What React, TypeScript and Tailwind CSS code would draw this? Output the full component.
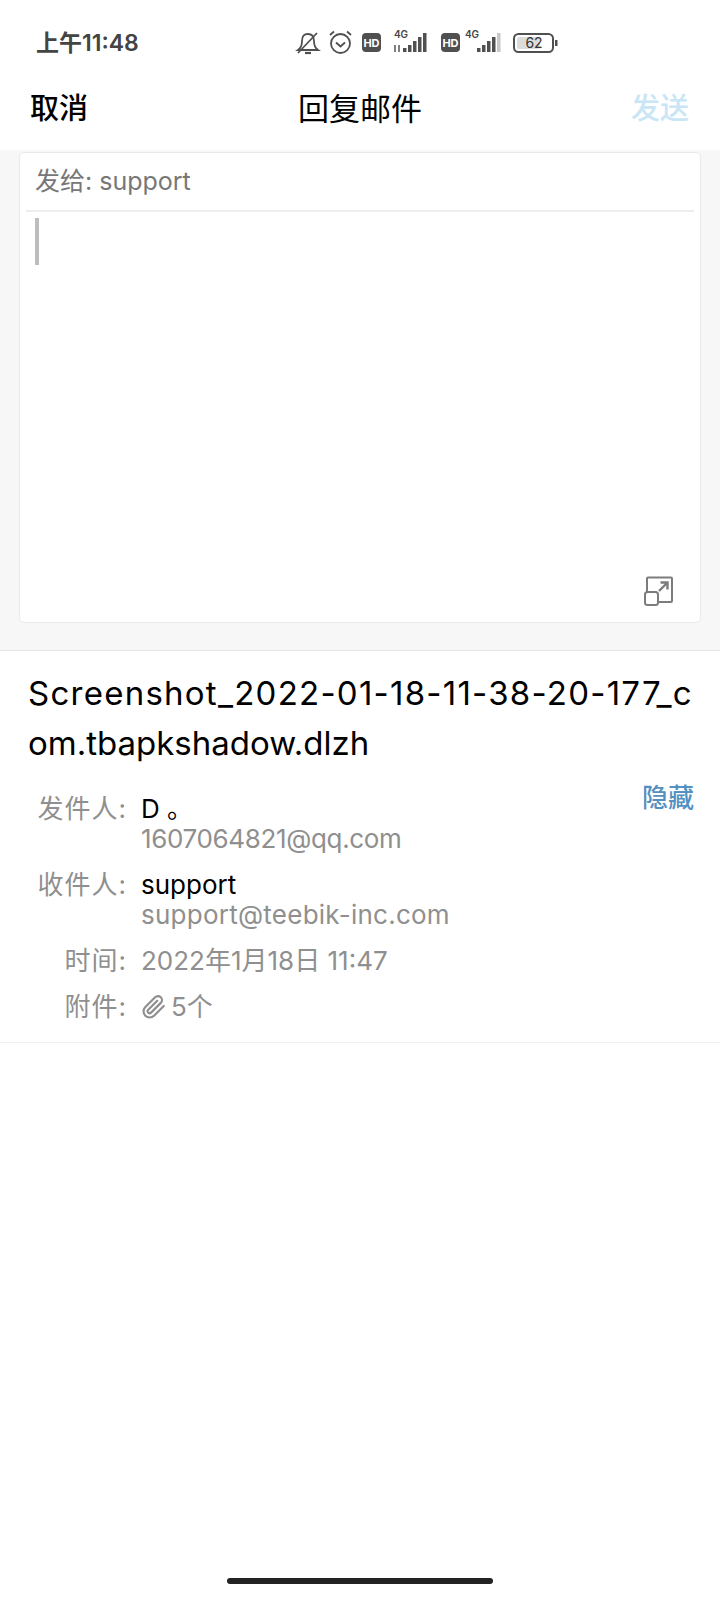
const sans = "font-['Inter','Noto_Sans_CJK_SC',sans-serif]";

function StatusIcons() {
  return (
    <svg width="266" height="32" viewBox="0 0 266 32" className="block">
      <g fill="none" stroke="#505050" strokeWidth="1.8">
        <path d="M4 23 C7 21 8 18 8 14 C8 9 10 7 14 7 C18 7 20 9 20 14 C20 18 21 21 24 23 Z" />
        <path d="M11 26 H17" strokeWidth="2.2" />
        <path d="M4 26 L23 6" />
        <circle cx="46.5" cy="16.5" r="9.5" />
        <path d="M42 15.5 L46.5 19.5 L51 15.5" />
        <path d="M36 8 L40 4.5 M57 8 L53 4.5" />
      </g>
      <rect x="68" y="6" width="19" height="19" rx="4" fill="#505050" />
      <text x="77.5" y="20" textAnchor="middle" fontSize="11" fontWeight="700" fill="#fff" fontFamily="Inter, sans-serif">HD</text>
      <text x="107" y="11" textAnchor="middle" fontSize="10" fontWeight="600" fill="#444" fontFamily="Inter, sans-serif">4G</text>
      <path d="M101 18 V25 M105 18 V25" stroke="#555" strokeWidth="1.5" />
      <g fill="#505050">
        <rect x="109" y="21" width="3.5" height="4" />
        <rect x="114" y="18" width="3.5" height="7" />
        <rect x="119" y="14" width="3.5" height="11" />
        <rect x="124" y="10" width="3.5" height="15" />
        <rect x="129" y="6" width="3.5" height="19" />
      </g>
      <rect x="147" y="6" width="19" height="19" rx="4" fill="#505050" />
      <text x="156.5" y="20" textAnchor="middle" fontSize="11" fontWeight="700" fill="#fff" fontFamily="Inter, sans-serif">HD</text>
      <text x="178" y="11" textAnchor="middle" fontSize="10" fontWeight="600" fill="#444" fontFamily="Inter, sans-serif">4G</text>
      <g fill="#505050">
        <rect x="183" y="21" width="3.5" height="4" />
        <rect x="188" y="18" width="3.5" height="7" />
        <rect x="193" y="14" width="3.5" height="11" />
        <rect x="198" y="10" width="3.5" height="15" />
      </g>
      <rect x="203" y="6" width="3.5" height="19" fill="#c8c8c8" />
      <rect x="220" y="7" width="39" height="18" rx="4.5" fill="none" stroke="#505050" strokeWidth="2" />
      <rect x="223" y="10" width="23" height="12" rx="2" fill="#dcdcdc" />
      <text x="240" y="21" textAnchor="middle" fontSize="14" fill="#333" fontFamily="Inter, sans-serif">62</text>
      <rect x="261" y="13" width="2.5" height="6" fill="#505050" />
    </svg>
  );
}

function ExpandIcon() {
  return (
    <svg width="30" height="30" viewBox="0 0 30 30" fill="none" stroke="#7c7c7c" strokeWidth="2">
      <path d="M3 16 V2.5 a1 1 0 0 1 1 -1 H27 a1 1 0 0 1 1 1 V25 a1 1 0 0 1 -1 1 H14" />
      <rect x="1" y="16" width="13" height="13" rx="2.5" />
      <path d="M15 15 L23 7 M16.5 6.5 H23.5 V13.5" strokeWidth="2.4" />
    </svg>
  );
}

function Clip() {
  return (
    <svg width="26" height="26" viewBox="0 0 24 24" fill="none" stroke="#8f8f8f" strokeWidth="2" strokeLinecap="round" strokeLinejoin="round">
      <path d="M21 11 l-9 9 a5.5 5.5 0 0 1 -8 -8 l9 -9 a3.7 3.7 0 0 1 5.3 5.2 l-9 9 a1.8 1.8 0 0 1 -2.6 -2.6 l8.3 -8.3" />
    </svg>
  );
}

function Row({ label, children, className = "" }: { label: string; children: React.ReactNode; className?: string }) {
  return (
    <div className={"flex " + className}>
      <div className="w-[127px] text-right text-[#8f8f8f] shrink-0 leading-[30px] tracking-[1px]">{label}:</div>
      <div className="ml-[14px] leading-[30px] flex-1">{children}</div>
    </div>
  );
}

export default function App() {
  return (
    <div className={"relative w-[720px] h-[1600px] bg-white overflow-hidden " + sans}>
      <div className="h-[86px] flex items-start">
        <div className="ml-[36px] w-[200px] mt-[29px] text-[23px] leading-[28px] font-semibold text-[#444]">上午11:48</div>
        <div className="ml-[58px] mt-[27px]"><StatusIcons /></div>
      </div>
      <div className="h-[64px] flex items-center justify-between pl-[30px] pr-[31px] pb-[18px]">
        <span className="font-medium text-black text-[29px]">取消</span>
        <span className="text-black text-[31px] ml-[1px]">回复邮件</span>
        <span className="text-[#c9e5f6] font-medium text-[29px]">发送</span>
      </div>
      <div className="h-[501px] bg-[#f7f7f7] border-b border-[#e6e6e6] px-[19px] pt-[2px]">
        <div className="h-[471px] bg-white rounded-[5px] border border-[#e9e9e9] flex flex-col px-[6px]">
          <div className="h-[59px] border-b-2 border-[#eeeeee] pl-[9px] pt-[1px] flex items-center text-[25px] text-[#777]">发给: support</div>
          <div className="w-[4px] h-[47px] bg-[#bdbdbd] ml-[9px] mt-[6px]" />
          <div className="mt-auto ml-auto mr-[20px] mb-[16px]"><ExpandIcon /></div>
        </div>
      </div>
      <div className="border-b border-[#f0f0f0] h-[392px] text-[26px]">
        <div className="pl-[28px] pr-[24px] pt-[17px] text-[33px] leading-[50px] text-black break-all">
          <span className="tracking-[1.25px]">Screenshot_2022-01-18-11-38-20-177_c</span>om.tbapkshadow.dlzh
        </div>
        <div className="relative mt-[26px] text-[26px]">
          <span className="absolute right-[26px] top-[-16px] text-[#5490c0] font-medium">隐藏</span>
          <Row label="发件人">
            <div className="text-black">D 。</div>
            <div className="text-[#8f8f8f] tracking-[-0.35px]">1607064821@qq.com</div>
          </Row>
          <Row label="收件人" className="mt-[16px]">
            <div className="text-black">support</div>
            <div className="text-[#8f8f8f] tracking-[0.25px]">support@teebik-inc.com</div>
          </Row>
          <Row label="时间" className="mt-[16px]">
            <div className="text-[#8f8f8f]">2022年1月18日 11:47</div>
          </Row>
          <Row label="附件" className="mt-[16px]">
            <div className="text-[#8f8f8f] flex items-center gap-[4px]"><Clip />5个</div>
          </Row>
        </div>
      </div>
      <div className="absolute left-[227px] bottom-[16px] w-[266px] h-[6px] rounded-full bg-[#222]" />
    </div>
  );
}
